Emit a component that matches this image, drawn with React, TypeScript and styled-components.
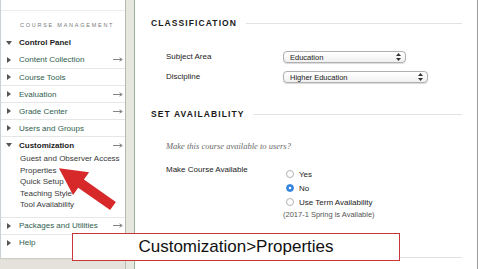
import React from 'react'
import styled, { createGlobalStyle } from 'styled-components'

const GlobalStyle = createGlobalStyle`
    html, body {
        margin: 0;
        padding: 0;
        background: #ffffff;
    }
    body {
        font-family: "Liberation Sans", Arial, sans-serif;
    }
`

const navItems = [
    { label: 'Content Collection', arrow: true, divider: false },
    { label: 'Course Tools', arrow: false, divider: true },
    { label: 'Evaluation', arrow: true, divider: true },
    { label: 'Grade Center', arrow: true, divider: true },
    { label: 'Users and Groups', arrow: false, divider: true },
]

const subItems = ['Guest and Observer Access', 'Properties', 'Quick Setup', 'Teaching Style', 'Tool Availability']

const Caret: React.FC<{ open?: boolean }> = ({ open }) => (
    <CaretIcon viewBox="0 0 6 6" width={6} height={6}>
        {open
            ? <polygon points="0,1 6,1 3,5" fill="#555" />
            : <polygon points="1,0 5,3 1,6" fill="#555" />}
    </CaretIcon>
)

const NavArrow = () => (
    <NavArrowIcon viewBox="0 0 10 5" width={10} height={5}>
        <line x1="0" y1="2.5" x2="8.5" y2="2.5" stroke="#777" strokeWidth="0.9" />
        <polyline points="6.5,0.8 9.3,2.5 6.5,4.2" fill="none" stroke="#777" strokeWidth="0.9" />
    </NavArrowIcon>
)

const SelectArrows = () => (
    <svg width={5} height={8} viewBox="0 0 5 8">
        <polygon points="0,3 2.5,0 5,3" fill="#333" />
        <polygon points="0,5 2.5,8 5,5" fill="#333" />
    </svg>
)

const App: React.FC = () => {
    return (
        <>
            <GlobalStyle />
            <Page>
                <Sidebar>
                    <SidebarPanel>
                        <MenuTitle>Course Management</MenuTitle>
                        <GroupRow>
                            <Caret open />
                            <GroupLabel>Control Panel</GroupLabel>
                        </GroupRow>
                        {navItems.map((item) => (
                            <NavRow key={item.label} divider={item.divider}>
                                <Caret />
                                <NavLabel>{item.label}</NavLabel>
                                {item.arrow && <NavArrow />}
                            </NavRow>
                        ))}
                        <NavRow divider>
                            <Caret open />
                            <GroupLabel>Customization</GroupLabel>
                            <NavArrow />
                        </NavRow>
                        <SubList>
                            {subItems.map((s) => <SubItem key={s}>{s}</SubItem>)}
                        </SubList>
                        <NavRow divider>
                            <Caret />
                            <NavLabel>Packages and Utilities</NavLabel>
                            <NavArrow />
                        </NavRow>
                        <NavRow divider>
                            <Caret />
                            <NavLabel>Help</NavLabel>
                        </NavRow>
                    </SidebarPanel>
                </Sidebar>
                <Gutter />
                <Content>
                    <SectionHeader>
                        <SectionTitle>Classification</SectionTitle>
                        <SectionRule />
                    </SectionHeader>
                    <FormBlock>
                        <FieldRow>
                            <FieldLabel>Subject Area</FieldLabel>
                            <SelectBox width={123}>
                                <span>Education</span>
                                <SelectArrows />
                            </SelectBox>
                        </FieldRow>
                        <FieldRow>
                            <FieldLabel>Discipline</FieldLabel>
                            <SelectBox width={145}>
                                <span>Higher Education</span>
                                <SelectArrows />
                            </SelectBox>
                        </FieldRow>
                    </FormBlock>
                    <SectionHeader spaced>
                        <SectionTitle>Set Availability</SectionTitle>
                        <SectionRule />
                    </SectionHeader>
                    <Instructions>Make this course available to users?</Instructions>
                    <FieldRow top>
                        <FieldLabel>Make Course Available</FieldLabel>
                        <RadioGroup>
                            <RadioOption>
                                <Radio />
                                <span>Yes</span>
                            </RadioOption>
                            <RadioOption>
                                <Radio checked />
                                <span>No</span>
                            </RadioOption>
                            <RadioOption>
                                <Radio />
                                <span>Use Term Availability</span>
                            </RadioOption>
                            <RadioNote>(2017-1 Spring is Available)</RadioNote>
                        </RadioGroup>
                    </FieldRow>
                    <BottomRule />
                </Content>
                <PointerArrow viewBox="0 0 75 55" width={75} height={55}>
                    <polygon
                        points="0,-5 39,-5 39,-14 66,0 39,14 39,5 0,5"
                        fill="#d7282a"
                        transform="translate(63 46) rotate(215)"
                    />
                </PointerArrow>
                <Callout>Customization&gt;Properties</Callout>
            </Page>
        </>
    )
}

const Page = styled.div`
    position: relative;
    display: flex;
    width: 478px;
    height: 269px;
    overflow: hidden;
    background: #ffffff;
`

const Sidebar = styled.div`
    width: 126px;
    flex-shrink: 0;
    display: flex;
    flex-direction: column;
    background: #e4e2db;
    border-right: 1px solid #b9bcb6;
    box-sizing: border-box;
`

const SidebarPanel = styled.div`
    background: #ffffff;
    border-left: 1px solid #c9d0d6;
    padding-top: 10px;
    padding-bottom: 7px;
    box-shadow: 0 1px 1px rgba(0, 0, 0, 0.1);
`

const MenuTitle = styled.div`
    border-top: 1px solid #ececec;
    padding: 10px 0 5px 19px;
    font-size: 5.5px;
    line-height: 8px;
    letter-spacing: 1.75px;
    text-transform: uppercase;
    color: #7a7a7a;
`

const CaretIcon = styled.svg`
    flex-shrink: 0;
    margin: 0 7px 0 5px;
`

const GroupRow = styled.div`
    display: flex;
    align-items: center;
    height: 17px;
`

const NavRow = styled.div<{ divider?: boolean }>`
    display: flex;
    align-items: center;
    height: 17px;
    box-sizing: border-box;
    border-top: ${(p) => (p.divider ? '1px solid #e6e6e6' : 'none')};
    padding-right: 2px;
`

const GroupLabel = styled.span`
    flex: 1;
    font-size: 8px;
    font-weight: bold;
    color: #222222;
`

const NavLabel = styled.span`
    flex: 1;
    font-size: 8px;
    color: #2f5e4e;
`

const NavArrowIcon = styled.svg`
    flex-shrink: 0;
`

const SubList = styled.div`
    display: flex;
    flex-direction: column;
    padding: 0 0 6px 19px;
`

const SubItem = styled.div`
    font-size: 8px;
    line-height: 11.5px;
    color: #3a3a3a;
`

const Gutter = styled.div`
    width: 9px;
    flex-shrink: 0;
    background: #e7e7dd;
    border-right: 1px solid #98b59c;
    box-sizing: border-box;
`

const Content = styled.div`
    flex: 1;
    display: flex;
    flex-direction: column;
    padding: 17px 15px 0 16px;
    border-right: 1px solid #9a9a9a;
    box-sizing: border-box;
`

const SectionHeader = styled.div<{ spaced?: boolean }>`
    display: flex;
    align-items: center;
    gap: 9px;
    height: 12px;
    margin-top: ${(p) => (p.spaced ? '25px' : '0')};
`

const SectionTitle = styled.div`
    font-size: 8.5px;
    font-weight: bold;
    letter-spacing: 1.1px;
    text-transform: uppercase;
    color: #1a1a1a;
`

const SectionRule = styled.div`
    flex: 1;
    height: 1px;
    background: #e3e3e3;
`

const FormBlock = styled.div`
    display: flex;
    flex-direction: column;
    gap: 8px;
    margin-top: 22px;
`

const FieldRow = styled.div<{ top?: boolean }>`
    display: flex;
    align-items: ${(p) => (p.top ? 'flex-start' : 'center')};
    padding-left: 15px;
    margin-top: ${(p) => (p.top ? '12px' : '0')};
    min-height: 12px;
`

const FieldLabel = styled.div`
    width: 117px;
    flex-shrink: 0;
    font-size: 8px;
    line-height: 12px;
    color: #222222;
`

const SelectBox = styled.div<{ width: number }>`
    display: flex;
    align-items: center;
    justify-content: space-between;
    width: ${(p) => p.width}px;
    height: 12px;
    box-sizing: border-box;
    padding: 0 4px 0 6px;
    border: 1px solid #b0b0b0;
    border-radius: 4px;
    background: linear-gradient(#ffffff, #f0f0f0);
    box-shadow: 0 0.5px 1px rgba(0, 0, 0, 0.15);
    font-size: 7.5px;
    color: #1a1a1a;
`

const Instructions = styled.div`
    margin-top: 20px;
    padding-left: 15px;
    font-family: "Liberation Serif", "Times New Roman", serif;
    font-style: italic;
    font-size: 8.5px;
    line-height: 12px;
    color: #6a6a6a;
`

const RadioGroup = styled.div`
    display: flex;
    flex-direction: column;
    margin-top: 3px;
`

const RadioOption = styled.label`
    display: flex;
    align-items: center;
    gap: 5px;
    height: 14px;
    padding-left: 3px;
    font-size: 8px;
    color: #222222;
`

const Radio = styled.span<{ checked?: boolean }>`
    width: 8px;
    height: 8px;
    box-sizing: border-box;
    border-radius: 50%;
    border: 1px solid ${(p) => (p.checked ? '#2f7fd8' : '#b3b3b3')};
    background: ${(p) => (p.checked ? 'radial-gradient(circle, #ffffff 0 1.3px, #3a8ae2 1.6px)' : '#ffffff')};
`

const RadioNote = styled.div`
    font-size: 7.5px;
    line-height: 12px;
    color: #555555;
`

const BottomRule = styled.div`
    height: 1px;
    margin-top: 36px;
    background: #e3e3e3;
`

const PointerArrow = styled.svg`
    position: absolute;
    left: 50px;
    top: 160px;
    pointer-events: none;
`

const Callout = styled.div`
    position: absolute;
    left: 72px;
    top: 233px;
    width: 328px;
    height: 28px;
    box-sizing: border-box;
    display: flex;
    align-items: center;
    justify-content: center;
    background: #ffffff;
    border: 1.5px solid #c8353a;
    font-size: 17px;
    color: #111111;
`

export default App
